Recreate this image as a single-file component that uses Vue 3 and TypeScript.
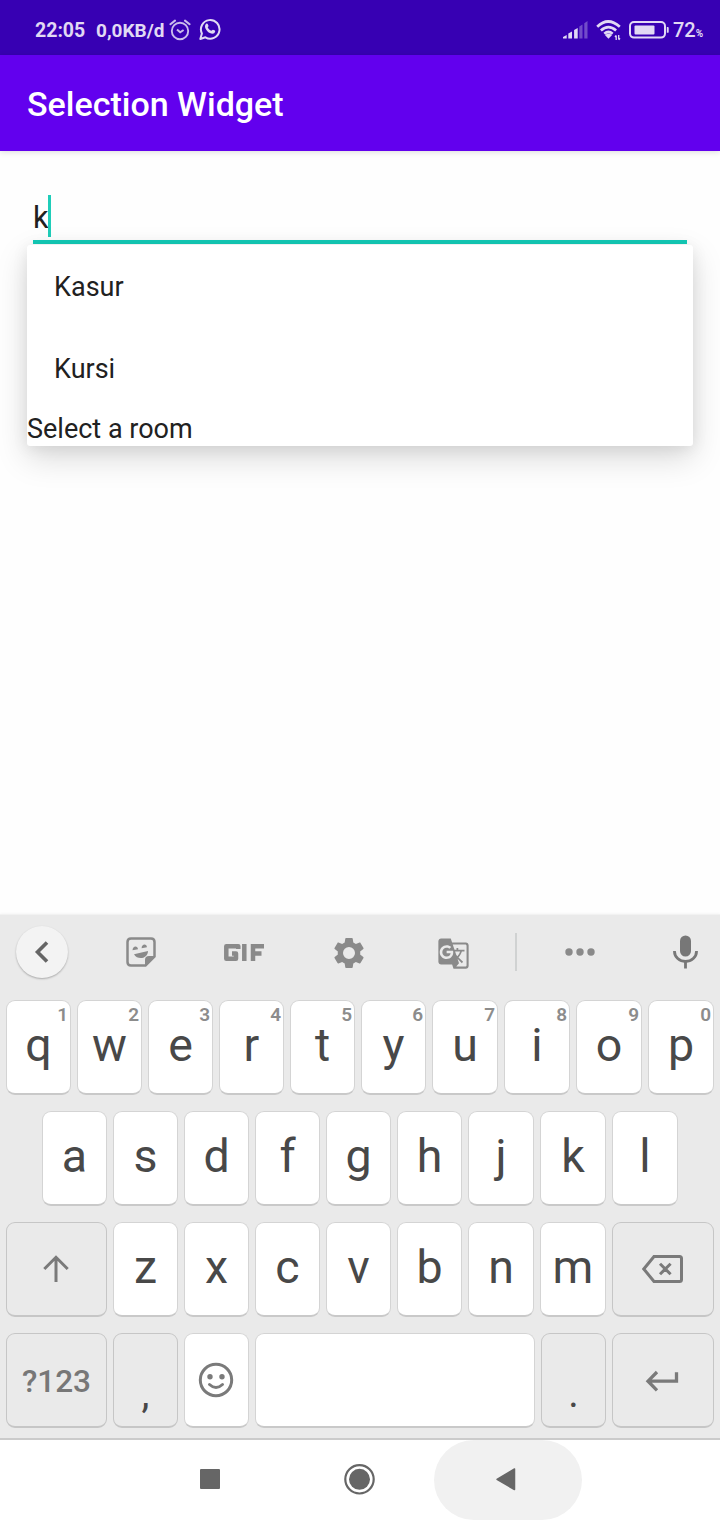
<script setup lang="ts">
import { ref } from 'vue'

interface Key {
  label?: string
  hint?: string
  icon?: 'shift' | 'backspace' | 'emoji' | 'enter'
  width: number
  kind?: 'dark' | 'symbol' | 'punct' | 'space'
}

const query = ref('k')
const suggestions = ['Kasur', 'Kursi']

const letters = (chars: string, wideFrom: number): Key[] =>
  [...chars].map((label, i) => ({ label, width: i >= wideFrom ? 66 : 65 }))

const rows: Key[][] = [
  letters('qwertyuiop', 6).map((key, i) => ({ ...key, hint: String((i + 1) % 10) })),
  letters('asdfghjkl', 6),
  [
    { icon: 'shift', width: 101, kind: 'dark' },
    ...letters('zxcvbnm', 5),
    { icon: 'backspace', width: 102, kind: 'dark' },
  ],
  [
    { label: '?123', width: 101, kind: 'symbol' },
    { label: ',', width: 65, kind: 'punct' },
    { icon: 'emoji', width: 65 },
    { width: 280, kind: 'space' },
    { label: '.', width: 65, kind: 'punct' },
    { icon: 'enter', width: 102, kind: 'dark' },
  ],
]
</script>

<template>
  <div class="screen">
    <header class="status">
      <span class="clock">22:05</span>
      <span class="speed">0,0KB/d</span>
      <svg class="alarm" width="22" height="22" viewBox="0 0 22 22" fill="none" stroke="currentColor">
        <circle cx="11" cy="12" r="8.2" stroke-width="1.9" />
        <path d="M1.4 5.2 6 1.6M20.6 5.2 16 1.6" stroke-width="2" stroke-linecap="round" />
        <path d="m8 10.600 3.200 2.700 3.400-2.300" stroke-width="2" />
      </svg>
      <svg class="whatsapp" width="22" height="23" viewBox="0 0 22 23">
        <path d="M1.300 21 2.900 15.500A9.300 9.300 0 1 1 6.400 19.300Z" fill="none" stroke="currentColor" stroke-width="2" stroke-linejoin="round" />
        <path d="M7.200 5.800c.5-.5 1.200-.4 1.500.2l.8 1.800c.2.5-.6 1.200-.8 1.500.8 1.700 2 2.800 3.700 3.500.4-.3 1.100-1.300 1.600-1.100l1.900.9c.8.5 0 2.100-.7 2.600-1.800 1.200-4.800-.1-6.600-1.800-1.700-1.700-3.100-4.200-2.500-6 .2-.6.6-1.100 1.100-1.600Z" fill="currentColor" />
      </svg>
      <span class="grow"></span>
      <svg class="signal" width="25" height="18" viewBox="0 0 25 18" fill="currentColor">
        <path d="M0 17.500v-1.500l3.700-2v3.500zM5.300 12.500 9 10.500v7H5.300zM11.100 9l3.600-2v10.500h-3.600z" />
        <path d="M16.300 5.500 19.500 3.500v14h-3.200zM21.300 2.200 24.500 0v17.500h-3.200z" opacity=".35" />
      </svg>
      <svg class="wifi" width="26" height="21" viewBox="0 0 26 21" fill="none" stroke="currentColor" stroke-width="2.700">
        <path d="M1.200 6.800Q12 -3.800 23.800 6.800M4.900 10.400Q12.400 3.700 20.100 10.400M8.300 13.700Q12.400 10.300 16.700 13.700" />
        <path d="m8.900 15 3.600 3.800 3.600-3.800q-3.600-2.700-7.200 0Z" fill="currentColor" stroke="none" />
        <path d="M20.200 20v-4.500M22.700 15v4.500M19 17l1.200-1.600M24 18.200l-1.300 1.500" stroke-width="1.300" />
      </svg>
      <svg class="battery" width="40" height="18" viewBox="0 0 40 18">
        <rect x="1" y="1" width="35" height="15.600" rx="4" fill="none" stroke="currentColor" stroke-width="2" />
        <rect x="5.500" y="4.500" width="20" height="9" rx="1" fill="currentColor" />
        <path d="M37.800 6h1q.9 0 .9.900v4q0 .9-.9.900h-1z" fill="currentColor" />
      </svg>
      <span class="percent">72<small>%</small></span>
    </header>

    <div class="appbar"><h1>Selection Widget</h1></div>

    <main class="content">
      <div class="field">
        <span>{{ query }}</span><i class="caret"></i>
      </div>
      <div class="dropdown">
        <div v-for="item in suggestions" :key="item" class="option">{{ item }}</div>
        <div class="hint-row">Select a room</div>
      </div>
    </main>

    <section class="keyboard">
      <div class="tools">
        <span class="tool-back">
          <svg width="52" height="52" viewBox="0 0 52 52"><path d="M31 16.500 21.500 26 31 35.500" fill="none" stroke="#656565" stroke-width="3.600" /></svg>
        </span>
        <svg class="sticker" width="30" height="30" viewBox="0 0 30 30">
          <path d="M5 1.500h20q3.500 0 3.500 3.500v14.500l-9 9H5q-3.500 0-3.500-3.500V5Q1.500 1.500 5 1.500Z" fill="none" stroke="currentColor" stroke-width="2.500" />
          <path d="M19 28.500V23q0-4 4-4h5.500z" fill="currentColor" />
          <path d="M6.500 13.300c0-5 5.500-5 5.500-1zM15.600 11.200c0-4.900 5.400-4.900 5.300-1zM8 17.200l14-3.300c-.2 8-10.500 9.500-14 3.300Z" fill="currentColor" />
        </svg>
        <svg class="gif" width="40" height="17" viewBox="0 0 40 17" role="img" aria-label="GIF" fill="none" stroke="currentColor" stroke-width="4.500">
          <path d="M14.300 5V2.300H2.300v12.400h9.700V9.500H8" stroke-linejoin="round" />
          <path d="M20.300 0v17M29 17V2.300H40M28 9.600h9.500" />
        </svg>
        <svg class="gear" width="36" height="36" viewBox="0 0 24 24" fill="currentColor">
          <path d="M19.430 12.980c.04-.32.070-.64.070-.98s-.03-.66-.07-.98l2.110-1.650c.19-.15.240-.42.120-.64l-2-3.460c-.12-.22-.39-.3-.61-.22l-2.490 1c-.52-.4-1.080-.73-1.690-.98l-.38-2.650C14.460 2.180 14.250 2 14 2h-4c-.25 0-.46.180-.49.420l-.38 2.650c-.61.250-1.170.590-1.690.980l-2.490-1c-.23-.09-.49 0-.61.220l-2 3.460c-.13.220-.07.490.12.640l2.110 1.650c-.04.320-.07.650-.07.980s.03.660.07.980l-2.110 1.650c-.19.150-.24.420-.12.640l2 3.460c.12.220.39.300.61.220l2.490-1c.52.400 1.080.730 1.690.980l.38 2.650c.03.240.24.420.49.420h4c.25 0 .46-.18.490-.42l.38-2.650c.61-.25 1.170-.59 1.690-.98l2.490 1c.23.090.49 0 .61-.22l2-3.460c.12-.22.070-.49-.12-.64l-2.110-1.650zM12 16a4 4 0 1 1 0-8 4 4 0 0 1 0 8z" />
        </svg>
        <svg class="translate" width="33" height="33" viewBox="0 0 24 24" fill="currentColor">
          <path d="M21 4H11l-1-3H3c-1.100 0-2 .9-2 2v15c0 1.100.9 2 2 2h8l1 3h9c1.100 0 2-.9 2-2V6c0-1.100-.9-2-2-2zM7 16c-2.760 0-5-2.240-5-5s2.240-5 5-5c1.350 0 2.480.5 3.350 1.300L9.030 8.570c-.38-.36-1.040-.78-2.030-.78-1.740 0-3.150 1.440-3.150 3.210S5.260 14.210 7 14.210c2.010 0 2.840-1.440 2.920-2.410H7v-1.710h4.680c.07.310.12.610.12 1.020C11.800 13.970 9.890 16 7 16zm6.170-5.420h3.700c-.43 1.250-1.110 2.430-2.050 3.470-.31-.35-.6-.72-.86-1.100l-.79-2.370zm8.330 9.920c0 .55-.45 1-1 1H14l2-2.500-1.040-3.100 3.100 3.100.92-.92-3.300-3.250.02-.02c1.130-1.250 1.930-2.690 2.400-4.220H20v-1.300h-4.530V8h-1.290v1.290h-1.440L11.460 5.500h9.040c.55 0 1 .45 1 1v14z" />
        </svg>
        <i class="divider"></i>
        <svg class="more" width="30" height="8" viewBox="0 0 30 8" fill="currentColor">
          <circle cx="4" cy="4" r="3.700" /><circle cx="15" cy="4" r="3.700" /><circle cx="26" cy="4" r="3.700" />
        </svg>
        <svg class="mic" width="25" height="34" viewBox="0 0 25 34">
          <rect x="7" y="0.500" width="11" height="21" rx="5.500" fill="currentColor" />
          <path d="M1.500 16v.5a11 10 0 0 0 22 0V16M12.500 26v7.500" fill="none" stroke="currentColor" stroke-width="2.800" />
        </svg>
      </div>

      <div class="keys">
        <div v-for="(row, r) in rows" :key="r" class="row">
          <div v-for="(key, k) in row" :key="k" class="key" :class="key.kind" :style="{ width: key.width + 'px' }">
            <span v-if="key.label" class="label">{{ key.label }}</span>
            <sup v-if="key.hint" class="num">{{ key.hint }}</sup>
            <svg v-if="key.icon === 'shift'" class="i-shift" width="28" height="28" viewBox="0 0 28 28">
              <path d="M14 27V2M2.300 14 14 2.300 25.700 14" />
            </svg>
            <svg v-else-if="key.icon === 'backspace'" class="i-back" width="41" height="28" viewBox="0 0 41 28">
              <path d="M12 1.500h25.500q2 0 2 2v21q0 2-2 2H12L1.800 14Z M18 8.800 28.600 19.200M28.600 8.800 18 19.200" />
            </svg>
            <svg v-else-if="key.icon === 'emoji'" class="i-emoji" width="36" height="36" viewBox="0 0 36 36">
              <circle cx="18" cy="18" r="15.700" />
              <circle class="dot" cx="12" cy="14.700" r="2.700" />
              <circle class="dot" cx="24" cy="14.700" r="2.700" />
              <path d="M11.500 22.500q6.500 6 13 0" stroke-linecap="round" />
            </svg>
            <svg v-else-if="key.icon === 'enter'" class="i-enter" width="34" height="22" viewBox="0 0 34 22">
              <path d="M31.500 2.300v8.900H3M12 2 3 11.200 12 20.400" />
            </svg>
          </div>
        </div>
      </div>
    </section>

    <nav class="nav">
      <svg width="720" height="80" viewBox="0 0 720 80" fill="#666">
        <path d="M474 0H542A40 40 0 0 1 542 80H474A40 40 0 0 1 474 0Z" fill="#f1f1f1" />
        <rect x="200" y="29" width="20" height="20" rx="1" />
        <circle cx="359.500" cy="39.300" r="10.500" />
        <circle cx="359.500" cy="39.300" r="14.200" fill="none" stroke="#666" stroke-width="2.200" />
        <path d="M497 39.300 514.500 29v20.600Z" stroke="#666" stroke-width="1.500" stroke-linejoin="round" />
      </svg>
    </nav>
  </div>
</template>

<style>
body {
  margin: 0;
}
</style>

<style scoped>
.screen {
  display: flex;
  flex-direction: column;
  width: 720px;
  height: 1520px;
  overflow: hidden;
  background: #fefefe;
  font-family: Roboto, "Liberation Sans", sans-serif;
}
.screen svg {
  display: block;
  flex: none;
}
.status {
  display: flex;
  align-items: flex-start;
  box-sizing: border-box;
  height: 55px;
  padding: 0 16px 0 35px;
  background: #3700b3;
  color: #e1d9f4;
  font-size: 19.500px;
  font-weight: 700;
  line-height: 61px;
  white-space: nowrap;
}
.clock {
  width: 61px;
}
.speed {
  width: 73px;
  font-size: 19px;
}
.alarm {
  margin-top: 19px;
  color: #cabcec;
}
.whatsapp {
  margin: 18px 0 0 8px;
}
.grow {
  flex: 1;
}
.signal {
  margin-top: 21px;
}
.wifi {
  margin: 20px 0 0 8px;
}
.battery {
  margin: 21px 0 0 7px;
}
.percent {
  width: 31px;
  margin-left: 4px;
  font-weight: 500;
  font-size: 20px;
}
.percent small {
  font-size: 10px;
  font-weight: 700;
}
.appbar {
  z-index: 1;
  height: 96px;
  background: #6200ee;
  box-shadow: 0 1px 6px rgba(0, 0, 0, 0.14);
}
h1 {
  margin: 0;
  padding-left: 27px;
  color: #fff;
  font-size: 34px;
  font-weight: 500;
  line-height: 98px;
}
.content {
  position: relative;
  height: 763px;
}
.field {
  display: flex;
  align-items: flex-start;
  box-sizing: border-box;
  width: 654px;
  height: 93px;
  margin-left: 33px;
  padding-top: 44px;
  border-bottom: 4px solid #14ccb8;
  color: #202020;
  font-size: 30.600px;
  line-height: 45px;
}
.caret {
  width: 3px;
  height: 42px;
  margin-left: -1px;
  background: #1fcdb9;
}
.dropdown {
  position: absolute;
  top: 94px;
  left: 27px;
  width: 666px;
  height: 201px;
  border-radius: 3px;
  background: #fff;
  box-shadow: 0 12px 32px rgba(0, 0, 0, 0.15), 0 2px 16px rgba(0, 0, 0, 0.08);
  color: #212121;
  font-size: 27px;
}
.option {
  height: 82px;
  padding-left: 27px;
  line-height: 85px;
}
.hint-row {
  line-height: 40px;
}
.keyboard {
  box-sizing: border-box;
  height: 526px;
  border-top: 1px solid #f2f2f2;
  border-bottom: 2px solid #cbcbcb;
  background: #eaeaea;
  box-shadow: 0 0 3px rgba(0, 0, 0, 0.06);
}
.tools {
  display: flex;
  align-items: flex-start;
  height: 86px;
  margin-top: -1px;
  color: #8a8a8a;
}
.tool-back {
  width: 52px;
  height: 52px;
  margin: 12px 0 0 16px;
  border-radius: 50%;
  background: #f3f3f3;
  box-shadow: 0 1px 2px rgba(0, 0, 0, 0.28);
}
.sticker {
  margin: 23px 0 0 57.500px;
}
.gif {
  margin: 30px 0 0 68px;
}
.gear {
  margin: 21px 0 0 67.500px;
}
.translate {
  margin: 22.500px 0 0 70px;
}
.divider {
  width: 2px;
  height: 38px;
  margin: 19px 0 0 45px;
  background: #d0d2d2;
}
.more {
  margin: 34px 0 0 47.500px;
}
.mic {
  margin: 21px 0 0 78.500px;
  color: #777;
}
.keys {
  display: flex;
  flex-direction: column;
  gap: 16px;
}
.row {
  display: flex;
  justify-content: center;
  gap: 6px;
  height: 95px;
}
.key {
  position: relative;
  display: flex;
  justify-content: center;
  box-sizing: border-box;
  border: 1px solid #d4d4d4;
  border-bottom: 2px solid #c9c9c9;
  border-radius: 9px;
  background: #fff;
  color: #484848;
  font-size: 46.500px;
  line-height: 88px;
}
.num {
  position: absolute;
  top: 3px;
  right: 2px;
  color: #8c8c8c;
  font-size: 19px;
  font-weight: 600;
  line-height: 22px;
}
.dark,
.symbol,
.punct {
  border-color: #c6c6c6;
  background: #eaeaea;
}
.symbol {
  color: #777;
  font-size: 31.500px;
  font-weight: 500;
  line-height: 95px;
}
.punct {
  font-size: 40px;
  line-height: 119px;
}
.key svg {
  fill: none;
  stroke: #7a7a7a;
  stroke-width: 3;
}
.key .dot {
  fill: #7a7a7a;
  stroke: none;
}
.i-shift {
  margin: 32px 2px 0 0;
}
.i-back {
  margin: 32px 1px 0 0;
}
.i-emoji {
  margin: 28px 1px 0 0;
}
.key .i-enter {
  margin: 36px 2px 0 0;
  stroke-width: 3.300;
}
.nav {
  height: 80px;
  background: #fff;
}
</style>
